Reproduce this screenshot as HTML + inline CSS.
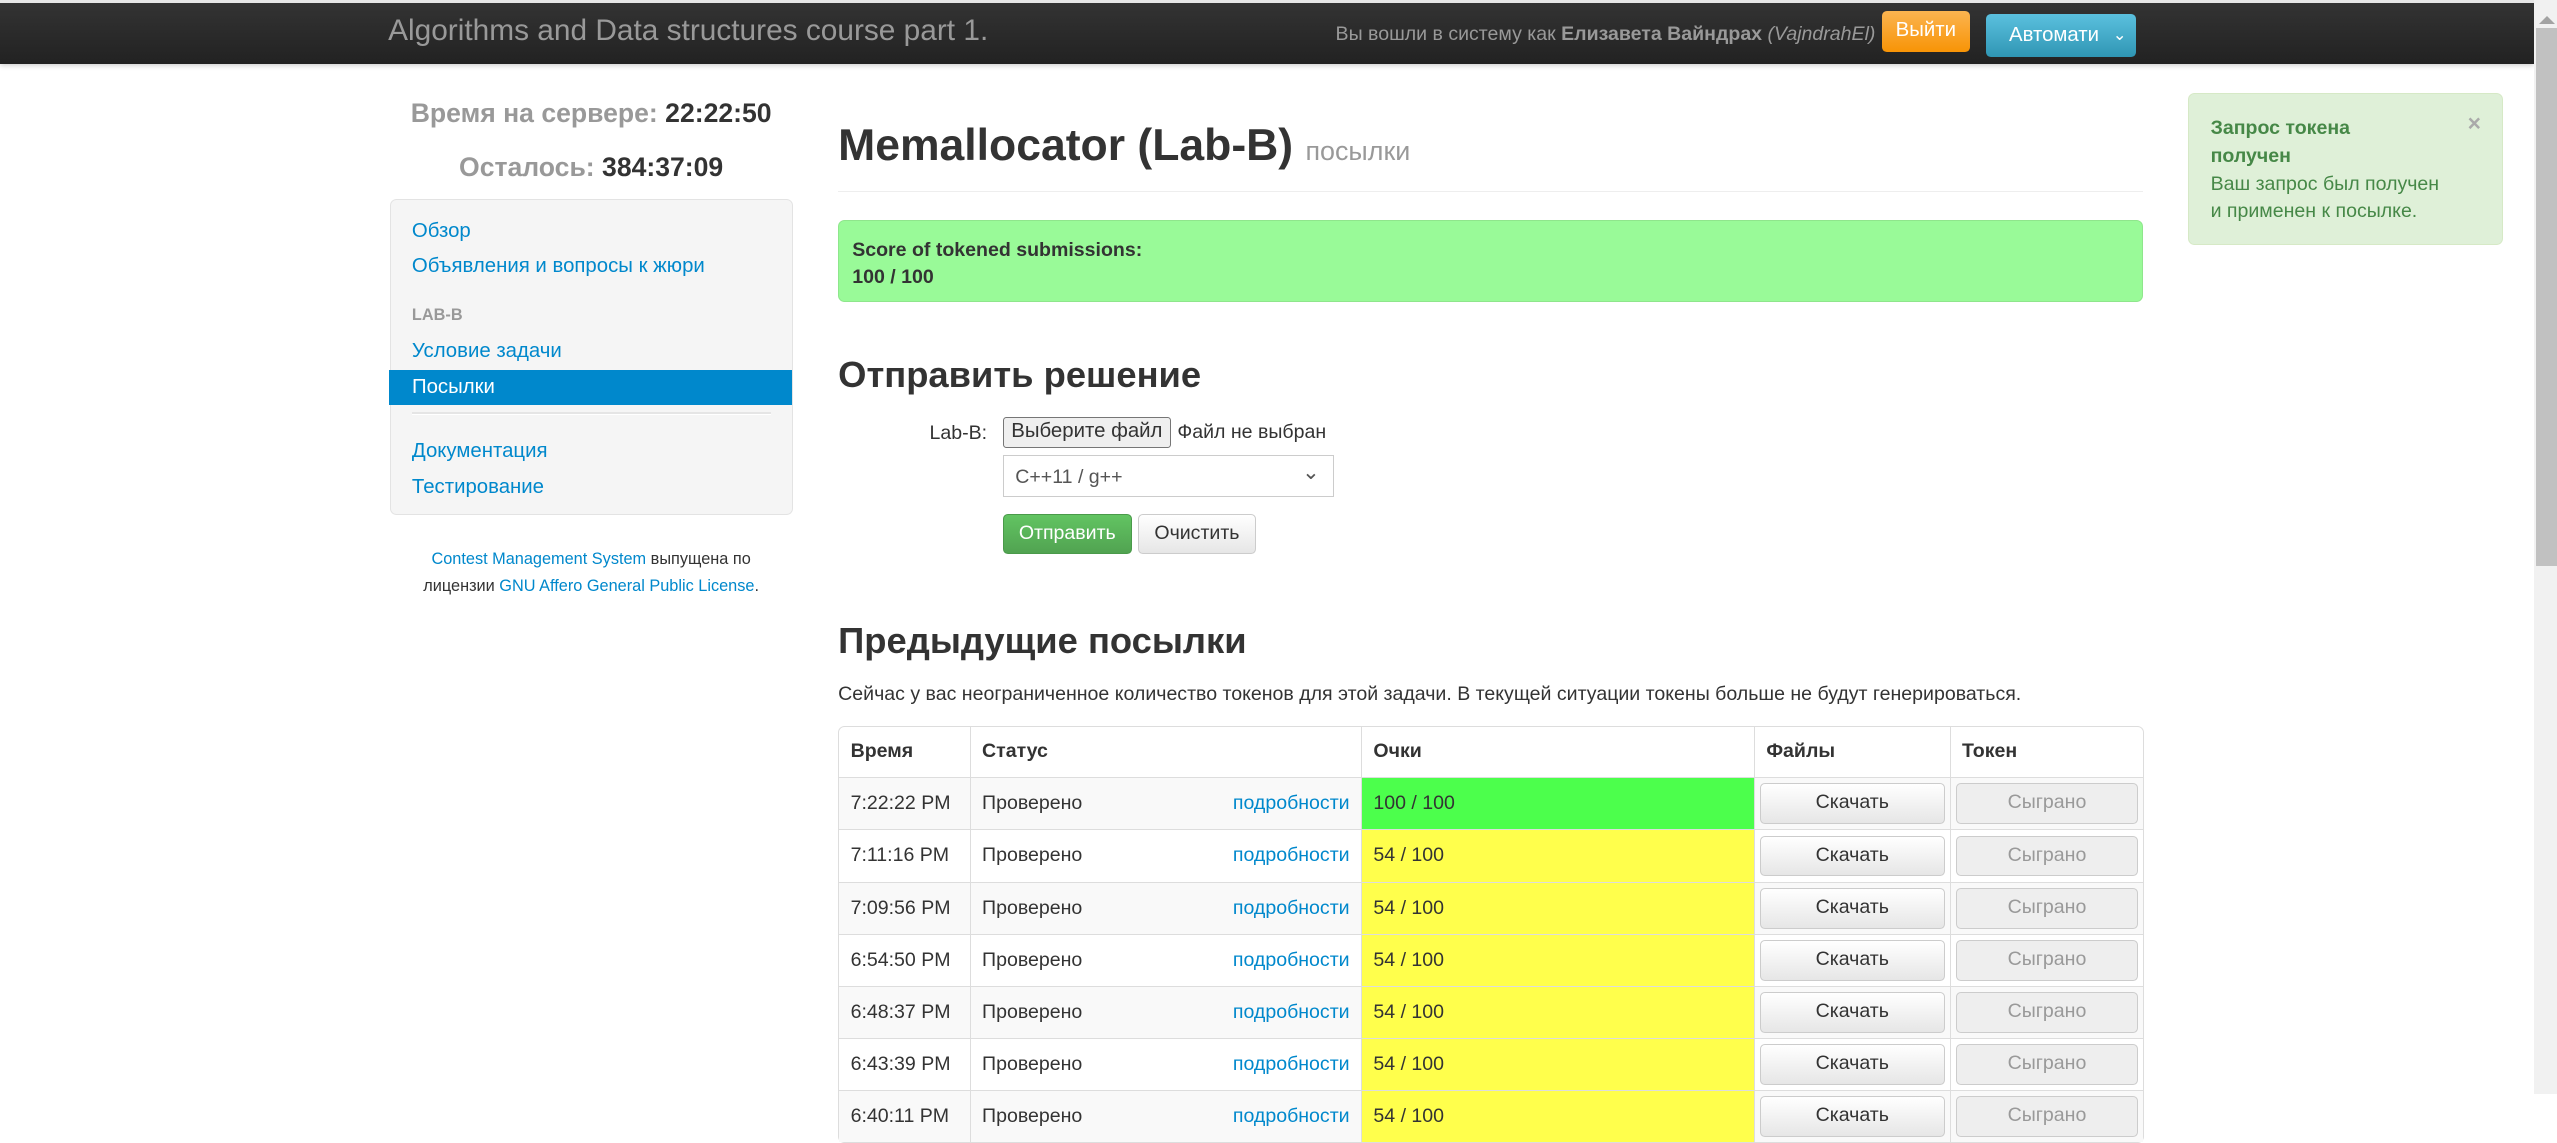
<!DOCTYPE html>
<html><head><meta charset="utf-8"><style>
html{zoom:1.6307}
body{margin:0;width:1568px;height:671px;overflow:hidden;font-family:"Liberation Sans",Arial,sans-serif;font-size:12px;color:#333;background:#fff;position:relative}
a{color:#0088cc;text-decoration:none}
.nav{position:absolute;left:0;top:0;width:1554px;height:39px;background:linear-gradient(#333,#222);border-top:2px solid #e6e6e6;box-sizing:border-box;box-shadow:0 1px 3px rgba(0,0,0,.2)}
.brand{position:absolute;left:238px;top:7px;font-size:18.3px;color:#999}
.login{position:absolute;left:819px;top:12px;font-size:12px;color:#999}
.login b{color:#999}
.btn-o{position:absolute;left:1154px;top:5px;width:54px;height:25px;background:linear-gradient(#fbb450,#f89406);border-radius:3px;color:#fff;font-size:12.5px;text-align:center;line-height:24px}
.btn-b{position:absolute;left:1218px;top:7px;width:92px;height:26px;background:linear-gradient(#5bc0de,#2f96b4);border-radius:3px;color:#fff;font-size:12.5px;line-height:26px}
.sb{position:absolute;left:1554px;top:0;width:14px;height:671px;background:#f1f1f1}
.sb .th{position:absolute;left:1px;right:0;top:17px;height:330px;background:#c1c1c1}
.sb .ar{position:absolute;left:3px;top:10px;width:0;height:0;border-left:5px solid transparent;border-right:5px solid transparent;border-bottom:5px solid #a3a3a3}
.time{position:absolute;left:239px;width:247px;text-align:center;font-size:16.3px;font-weight:bold;color:#999}
.time span{color:#333}
.side{position:absolute;left:239px;top:122px;width:247px;height:194px;background:#f5f5f5;border:1px solid #e3e3e3;border-radius:4px;box-sizing:border-box}
.side div{position:absolute;left:13px;font-size:12.5px}
.side .act{left:-1px;width:247px;height:22px;background:#0088cc;color:#fff;line-height:22px;padding-left:14px;box-sizing:border-box}
.foot{position:absolute;left:239px;width:247px;text-align:center;font-size:10px;color:#333}
h1,h2{margin:0;position:absolute;left:514px;white-space:nowrap;color:#333}
.alert{position:absolute;left:514px;top:135px;width:800px;height:50px;box-sizing:border-box;background:#99fa98;border:1px solid #8fe68c;border-radius:4px;padding:10px 8px;font-weight:bold;font-size:12px;line-height:16px}
.fbtn{position:absolute;left:615px;top:256px;width:103px;height:19px;border:1px solid #767676;background:#efefef;border-radius:2px;font-size:12.5px;text-align:center;line-height:17px;box-sizing:border-box}
.sel{position:absolute;left:615px;top:279px;width:203px;height:26px;border:1px solid #ccc;box-sizing:border-box;font-size:12px;padding:6px 7px;color:#555}
.b1{position:absolute;left:615px;top:315px;width:79px;height:25px;background:linear-gradient(#62c462,#51a351);border:1px solid #4a9a4a;border-radius:3px;box-sizing:border-box;color:#fff;text-align:center;line-height:23px;font-size:12px}
.b2{position:absolute;left:698px;top:315px;width:72px;height:25px;background:linear-gradient(#fff,#e6e6e6);border:1px solid #ccc;border-radius:3px;box-sizing:border-box;text-align:center;line-height:23px;font-size:12px}
table{position:absolute;left:514px;top:445px;width:801px;border-collapse:separate;border-spacing:0;border:1px solid #ddd;border-radius:4px;font-size:12px}
td,th{height:32px;padding:0 7px;border-left:1px solid #ddd;border-top:1px solid #ddd;text-align:left;box-sizing:border-box}
tr:first-child th{border-top:0;height:31px}
td:first-child,th:first-child{border-left:0}
tr:nth-child(even) td{background:#f9f9f9}
.g{background:#4cff4c!important}.y{background:#ffff4c!important}
.bt{height:25px;border:1px solid #ccc;border-radius:3px;background:linear-gradient(#fff,#e6e6e6);text-align:center;line-height:23px;box-sizing:border-box;margin:0 -1px}
.bt.d{background:#eee;color:#999}
td.c{padding:0 4px}
.note{position:absolute;left:1342px;top:57px;width:193px;height:93px;background:#dff0d8;border:1px solid #d6e9c6;border-radius:4px;box-sizing:border-box;color:#468847;font-size:12px;line-height:17px;padding:13px 13px}
</style></head><body>
<div class="nav">
<div class="brand">Algorithms and Data structures course part 1.</div>
<div class="login">Вы вошли в систему как <b>Елизавета Вайндрах</b> <i>(VajndrahEl)</i></div>
<div class="btn-o">Выйти</div>
<div class="btn-b"><span style="margin-left:14px">Автомати</span><span style="position:absolute;right:6px;top:0;font-size:10px">&#8964;</span></div>
</div>
<div class="sb"><div class="ar"></div><div class="th"></div></div>
<div class="time" style="top:60px">Время на сервере: <span>22:22:50</span></div>
<div class="time" style="top:93px">Осталось: <span>384:37:09</span></div>
<div class="side">
<div style="top:12px"><a>Обзор</a></div>
<div style="top:34px"><a>Объявления и вопросы к жюри</a></div>
<div style="top:65px;font-size:10px;font-weight:bold;color:#999">LAB-B</div>
<div style="top:86px"><a>Условие задачи</a></div>
<div class="act" style="top:104px">Посылки</div>
<div style="top:130px;width:220px;height:1px;background:#e5e5e5;border-bottom:1px solid #fff"></div>
<div style="top:147px"><a>Документация</a></div>
<div style="top:169px"><a>Тестирование</a></div>
</div>
<div class="foot" style="top:337px"><a>Contest Management System</a> выпущена по</div>
<div class="foot" style="top:354px">лицензии <a>GNU Affero General Public License</a>.</div>
<h1 style="top:74px;font-size:27.3px">Memallocator (Lab-B) <small style="font-size:16.5px;font-weight:normal;color:#999">посылки</small></h1>
<div style="position:absolute;left:514px;top:117px;width:800px;height:1px;background:#eee"></div>
<div class="alert">Score of tokened submissions:<br>100 / 100</div>
<h2 style="top:217px;font-size:22.3px">Отправить решение</h2>
<div style="position:absolute;left:570px;top:259px;font-size:12px">Lab-B:</div>
<div class="fbtn">Выберите файл</div>
<div style="position:absolute;left:722px;top:258px;font-size:12px">Файл не выбран</div>
<div class="sel">C++11 / g++<span style="position:absolute;right:8px;top:2px;font-size:13px">&#8964;</span></div>
<div class="b1">Отправить</div>
<div class="b2">Очистить</div>
<h2 style="top:380px;font-size:22.3px">Предыдущие посылки</h2>
<div style="position:absolute;left:514px;top:419px;font-size:12px">Сейчас у вас неограниченное количество токенов для этой задачи. В текущей ситуации токены больше не будут генерироваться.</div>
<table>
<tr><th style="width:80px">Время</th><th style="width:240px">Статус</th><th style="width:241px">Очки</th><th style="width:120px">Файлы</th><th>Токен</th></tr>
<tr><td>7:22:22 PM</td><td>Проверено<a style="float:right">подробности</a></td><td class="g">100 / 100</td><td class="c"><div class="bt">Скачать</div></td><td class="c"><div class="bt d">Сыграно</div></td></tr>
<tr><td>7:11:16 PM</td><td>Проверено<a style="float:right">подробности</a></td><td class="y">54 / 100</td><td class="c"><div class="bt">Скачать</div></td><td class="c"><div class="bt d">Сыграно</div></td></tr>
<tr><td>7:09:56 PM</td><td>Проверено<a style="float:right">подробности</a></td><td class="y">54 / 100</td><td class="c"><div class="bt">Скачать</div></td><td class="c"><div class="bt d">Сыграно</div></td></tr>
<tr><td>6:54:50 PM</td><td>Проверено<a style="float:right">подробности</a></td><td class="y">54 / 100</td><td class="c"><div class="bt">Скачать</div></td><td class="c"><div class="bt d">Сыграно</div></td></tr>
<tr><td>6:48:37 PM</td><td>Проверено<a style="float:right">подробности</a></td><td class="y">54 / 100</td><td class="c"><div class="bt">Скачать</div></td><td class="c"><div class="bt d">Сыграно</div></td></tr>
<tr><td>6:43:39 PM</td><td>Проверено<a style="float:right">подробности</a></td><td class="y">54 / 100</td><td class="c"><div class="bt">Скачать</div></td><td class="c"><div class="bt d">Сыграно</div></td></tr>
<tr><td>6:40:11 PM</td><td>Проверено<a style="float:right">подробности</a></td><td class="y">54 / 100</td><td class="c"><div class="bt">Скачать</div></td><td class="c"><div class="bt d">Сыграно</div></td></tr>
</table>
<div class="note"><span style="position:absolute;right:13px;top:10px;color:#aaa;font-weight:bold;font-size:14px">×</span><b>Запрос токена<br>получен</b><br>Ваш запрос был получен<br>и применен к посылке.</div>
</body></html>
